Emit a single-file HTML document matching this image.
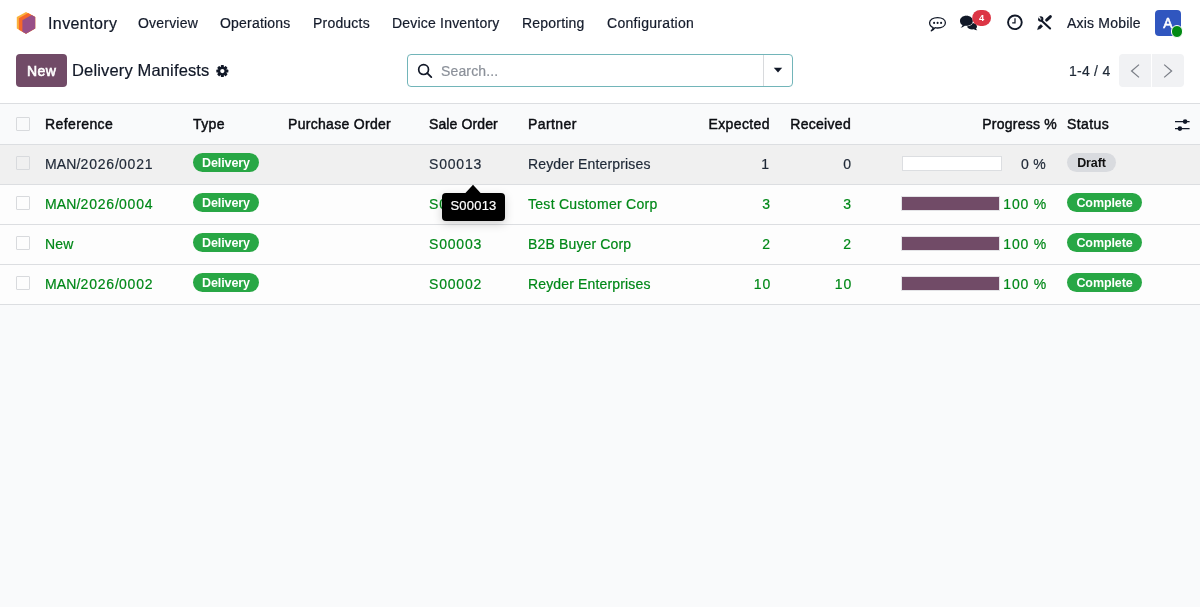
<!DOCTYPE html>
<html><head><meta charset="utf-8">
<style>
*{box-sizing:border-box;margin:0;padding:0}
html,body{width:1200px;height:607px;overflow:hidden;background:#f9fafb;font-family:"Liberation Sans",sans-serif;color:#1f2937;font-size:14px}
.a{position:absolute;white-space:nowrap;line-height:20px;-webkit-text-stroke-width:.2px}
svg{position:absolute;overflow:visible}
.top{position:absolute;left:0;top:0;width:1200px;height:103px;background:#fff}
.nv{top:13px;font-size:14px;color:#141b2b;letter-spacing:.2px}
.btn-new{position:absolute;left:16px;top:54px;width:51px;height:33px;background:#714b67;border-radius:4px}
.search{position:absolute;left:407px;top:54px;width:386px;height:33px;border:1px solid #72b5b9;border-radius:4px;background:#fff}
.pbtn{position:absolute;top:54px;width:32px;height:33px;background:#f1f2f4}
.hdr{position:absolute;left:0;top:103px;width:1200px;height:42px;background:#f9fafb;border-top:1px solid #dcdee1;border-bottom:1px solid #dcdee1}
.row{position:absolute;left:0;width:1200px;height:40px;border-bottom:1px solid #dcdee1;background:#fdfdfd}
.h{color:#0b0d12;-webkit-text-stroke-width:.45px;letter-spacing:.4px}
.c{top:9px;letter-spacing:.15px}
.d{letter-spacing:.8px}
.cb{position:absolute;left:16px;width:14px;height:14px;border:1px solid #d8dadd;background:transparent;border-radius:1px}
.g{color:#008818}
.dk{color:#1f2937}
.badge{position:absolute;top:8px;height:19px;border-radius:10px;font-weight:bold;font-size:12.5px;line-height:21px;text-align:center;color:#fff;background:#28a745;letter-spacing:-.1px}
.draft{background:#d9dbdf;color:#111}
.pb{position:absolute;height:15px;border:1px solid #dcdee1;background:#fff}
.pbf{position:absolute;height:15px;border:1px solid #e3e3e6;background:#714b67}
</style></head><body>
<div style="position:absolute;left:0;top:0;width:1200px;height:607px;background:#f9fafb;will-change:transform">
<div class="top"></div>
<!-- logo -->
<svg style="left:0;top:0" width="40" height="40" viewBox="0 0 40 40">
  <polygon fill="#fbb13c" points="26,11.9 35.2,17.1 35.2,28.5 26,33.8 16.8,28.5 16.8,17.1"/>
  <polygon fill="#f6682a" points="18.9,18.3 28.1,13.1 35.2,17.1 35.2,28.5 26,33.8 18.9,29.8"/>
  <polygon fill="#984f87" points="22.4,20.3 31.6,15.1 35.2,17.1 35.2,28.5 26,33.8 22.4,31.8"/>
</svg>
<div class="a" style="left:48px;top:14px;font-size:16px;letter-spacing:.4px;color:#111827">Inventory</div>
<div class="a nv" style="left:138px">Overview</div>
<div class="a nv" style="left:220px">Operations</div>
<div class="a nv" style="left:313px">Products</div>
<div class="a nv" style="left:392px">Device Inventory</div>
<div class="a nv" style="left:522px">Reporting</div>
<div class="a nv" style="left:607px;letter-spacing:.3px">Configuration</div>

<!-- chat outline icon -->
<svg style="left:925px;top:12px" width="26" height="24" viewBox="925 12 26 24">
  <path d="M933.2,27.6 C930.6,26.6 929.6,24.9 929.6,22.8 C929.6,19.7 933.1,17.6 937.6,17.6 C942.1,17.6 945.4,19.7 945.4,22.8 C945.4,25.9 942.1,28 937.6,28 C936.6,28 935.6,27.9 934.9,27.7 C934,29.3 932.6,30.4 931.2,30.9 C932.2,29.9 932.9,28.9 933.2,27.6 Z" fill="none" stroke="#111827" stroke-width="1.3" stroke-linejoin="round"/>
  <circle cx="934.1" cy="22.9" r="1.05" fill="#111827"/>
  <circle cx="937.6" cy="22.9" r="1.05" fill="#111827"/>
  <circle cx="941.1" cy="22.9" r="1.05" fill="#111827"/>
</svg>
<!-- discuss icon -->
<svg style="left:955px;top:5px" width="40" height="30" viewBox="955 5 40 30">
  <path d="M967.2,27 C967.6,24.6 969.6,23 972.2,23 C975,23 977,24.7 977,26.6 C977,27.6 976.6,28.3 976,28.8 C976.3,29.4 976.8,29.8 977.4,30.2 C975.9,30.2 974.7,29.8 973.8,29.3 C973.3,29.4 972.7,29.4 972.2,29.4 C970,29.4 968,28.5 967.2,27 Z" fill="#111827"/>
  <path d="M962.6,25 C960.9,24.2 960,22.8 960,20.9 C960,17.9 962.8,15.8 966.4,15.8 C970,15.8 972.8,17.9 972.8,20.9 C972.8,23.8 970,25.8 966.4,25.8 C965.8,25.8 965.3,25.8 964.8,25.7 C963.6,26.7 962.2,27.3 960.6,27.7 C961.6,26.9 962.3,26 962.6,25 Z" fill="#111827" stroke="#fff" stroke-width="1.1"/>
  <path d="M962.6,25 C960.9,24.2 960,22.8 960,20.9 C960,17.9 962.8,15.8 966.4,15.8 C970,15.8 972.8,17.9 972.8,20.9 C972.8,23.8 970,25.8 966.4,25.8 C965.8,25.8 965.3,25.8 964.8,25.7 C963.6,26.7 962.2,27.3 960.6,27.7 C961.6,26.9 962.3,26 962.6,25 Z" fill="#111827"/>
  <rect x="972.2" y="9.9" width="18.8" height="16" rx="8" fill="#dc3545"/>
  <text x="981.7" y="20.8" font-family="Liberation Sans" font-weight="bold" font-size="9.3" fill="#fff" text-anchor="middle">4</text>
</svg>
<!-- clock -->
<svg style="left:1000px;top:8px" width="30" height="30" viewBox="1000 8 30 30">
  <circle cx="1014.9" cy="22.3" r="6.85" fill="none" stroke="#111827" stroke-width="1.9"/>
  <path d="M1015,18.2 V22.9 H1012.2" fill="none" stroke="#111827" stroke-width="1.25"/>
</svg>
<!-- tools -->
<svg style="left:1032px;top:10px" width="26" height="26" viewBox="1032 10 26 26">
  <path d="M1041.4,20.4 L1050.1,28.5" stroke="#111827" stroke-width="2.1" stroke-linecap="round"/>
  <circle cx="1040.7" cy="19" r="1.75" fill="none" stroke="#111827" stroke-width="1.9"/>
  <circle cx="1039.3" cy="17.6" r="1.05" fill="#fff"/>
  <path d="M1046.6,20.1 L1050.4,16.6" stroke="#111827" stroke-width="2.9" stroke-linecap="round"/>
  <path d="M1037.5,29.6 L1038.6,26.6 L1040.9,24.6 L1042.7,26.3 L1040.6,28.5 Z" fill="#111827" stroke="#111827" stroke-width=".5" stroke-linejoin="round"/>
</svg>
<div class="a nv" style="left:1067px">Axis Mobile</div>
<div style="position:absolute;left:1155px;top:10px;width:26px;height:26px;background:#3056bf;border-radius:4px"></div>
<div class="a" style="left:1155px;top:13px;width:26px;text-align:center;color:#fff;font-size:14px;-webkit-text-stroke-width:.55px">A</div>
<div style="position:absolute;left:1170.5px;top:25.3px;width:12.4px;height:12.4px;background:#028a13;border-radius:50%;border:1.3px solid #fff"></div>

<!-- control panel -->
<div class="btn-new"></div>
<div class="a" style="left:27px;top:61px;color:#fff;font-size:14px;-webkit-text-stroke-width:.6px;letter-spacing:.4px">New</div>
<div class="a" style="left:72px;top:59.5px;font-size:16.5px;letter-spacing:.15px;color:#111827">Delivery Manifests</div>
<svg style="left:210px;top:60px" width="24" height="24" viewBox="210 60 24 24">
  <g transform="translate(222.35,71.1)" fill="#111827">
    <rect x="-1.5" y="-6" width="3" height="12" rx=".6"/>
    <rect x="-1.5" y="-6" width="3" height="12" rx=".6" transform="rotate(45)"/>
    <rect x="-1.5" y="-6" width="3" height="12" rx=".6" transform="rotate(90)"/>
    <rect x="-1.5" y="-6" width="3" height="12" rx=".6" transform="rotate(135)"/>
    <circle r="4.4"/>
    <circle r="2.15" fill="#fff"/>
  </g>
</svg>
<div class="search">
  <div style="position:absolute;left:355px;top:0;width:1px;height:31px;background:#d8dadd"></div>
</div>
<svg style="left:412px;top:58px" width="26" height="26" viewBox="412 58 26 26">
  <circle cx="423.6" cy="69.6" r="4.9" fill="none" stroke="#111827" stroke-width="1.7"/>
  <path d="M427.2,73.2 L431.3,77.1" stroke="#111827" stroke-width="1.8" stroke-linecap="round"/>
</svg>
<div class="a" style="left:441px;top:61px;color:#8b9099;letter-spacing:.15px">Search...</div>
<svg style="left:770px;top:64px" width="16" height="12" viewBox="770 64 16 12">
  <path d="M773.8,67.8 H782.2 L778,72.5 Z" fill="#111827"/>
</svg>
<div class="a" style="left:1069px;top:61px;letter-spacing:.25px;color:#1f2937">1-4 / 4</div>
<div class="pbtn" style="left:1119px;border-radius:4px 0 0 4px"></div>
<div class="pbtn" style="left:1152px;border-radius:0 4px 4px 0"></div>
<svg style="left:1125px;top:60px" width="60" height="24" viewBox="1125 60 60 24">
  <path d="M1139,64.6 L1131.6,71 L1139,77.4" fill="none" stroke="#7a7e86" stroke-width="1.25"/>
  <path d="M1164.2,64.6 L1171.6,71 L1164.2,77.4" fill="none" stroke="#7a7e86" stroke-width="1.25"/>
</svg>

<!-- table header -->
<div class="hdr"></div>
<div class="cb" style="top:117px"></div>
<div class="a h" style="left:45px;top:114px">Reference</div>
<div class="a h" style="left:193px;top:114px">Type</div>
<div class="a h" style="left:288px;top:114px;letter-spacing:.3px">Purchase Order</div>
<div class="a h" style="left:429px;top:114px;letter-spacing:.12px">Sale Order</div>
<div class="a h" style="left:528px;top:114px">Partner</div>
<div class="a h" style="right:430px;top:114px">Expected</div>
<div class="a h" style="right:349px;top:114px;letter-spacing:.3px">Received</div>
<div class="a h" style="right:143px;top:114px;letter-spacing:.25px">Progress %</div>
<div class="a h" style="left:1067px;top:114px">Status</div>
<svg style="left:1170px;top:114px" width="26" height="22" viewBox="1170 114 26 22">
  <path d="M1175,121.6 H1189.6 M1175,128.6 H1189.6" stroke="#111827" stroke-width="1.3"/>
  <circle cx="1185.1" cy="121.6" r="2.3" fill="#111827"/>
  <circle cx="1179.9" cy="128.6" r="2.3" fill="#111827"/>
</svg>

<!-- row 1 -->
<div class="row" style="top:145px;background:#f0f0f0"></div>
<div class="cb" style="top:156px"></div>
<div class="a dk" style="left:45px;top:154px;letter-spacing:.15px">MAN/<span class="d">2026</span>/<span class="d">0021</span></div>
<div class="badge" style="left:193px;top:153px;width:66px">Delivery</div>
<div class="a dk d" style="left:429px;top:154px">S00013</div>
<div class="a dk c" style="left:528px;top:154px">Reyder Enterprises</div>
<div class="a dk" style="right:431px;top:154px">1</div>
<div class="a dk" style="right:349px;top:154px">0</div>
<div class="pb" style="left:902px;top:156px;width:100px"></div>
<div class="a dk" style="right:154px;top:154px;letter-spacing:.3px">0 %</div>
<div class="badge draft" style="left:1067px;top:153px;width:49px">Draft</div>

<!-- row 2 -->
<div class="row" style="top:185px"></div>
<div class="cb" style="top:196px"></div>
<div class="a g" style="left:45px;top:194px;letter-spacing:.15px">MAN/<span class="d">2026</span>/<span class="d">0004</span></div>
<div class="badge" style="left:193px;top:193px;width:66px">Delivery</div>
<div class="a g d" style="left:429px;top:194px">S00004</div>
<div class="a g c" style="left:528px;top:194px;letter-spacing:.28px">Test Customer Corp</div>
<div class="a g" style="right:430px;top:194px">3</div>
<div class="a g" style="right:349px;top:194px">3</div>
<div class="pbf" style="left:900.5px;top:196px;width:99px"></div>
<div class="a g d" style="right:153px;top:194px">100 %</div>
<div class="badge" style="left:1067px;top:193px;width:75px">Complete</div>

<!-- row 3 -->
<div class="row" style="top:225px"></div>
<div class="cb" style="top:236px"></div>
<div class="a g c" style="left:45px;top:234px">New</div>
<div class="badge" style="left:193px;top:233px;width:66px">Delivery</div>
<div class="a g d" style="left:429px;top:234px">S00003</div>
<div class="a g c" style="left:528px;top:234px">B2B Buyer Corp</div>
<div class="a g" style="right:430px;top:234px">2</div>
<div class="a g" style="right:349px;top:234px">2</div>
<div class="pbf" style="left:900.5px;top:236px;width:99px"></div>
<div class="a g d" style="right:153px;top:234px">100 %</div>
<div class="badge" style="left:1067px;top:233px;width:75px">Complete</div>

<!-- row 4 -->
<div class="row" style="top:265px"></div>
<div class="cb" style="top:276px"></div>
<div class="a g" style="left:45px;top:274px;letter-spacing:.15px">MAN/<span class="d">2026</span>/<span class="d">0002</span></div>
<div class="badge" style="left:193px;top:273px;width:66px">Delivery</div>
<div class="a g d" style="left:429px;top:274px">S00002</div>
<div class="a g c" style="left:528px;top:274px">Reyder Enterprises</div>
<div class="a g d" style="right:429px;top:274px">10</div>
<div class="a g d" style="right:348px;top:274px">10</div>
<div class="pbf" style="left:900.5px;top:276px;width:99px"></div>
<div class="a g d" style="right:153px;top:274px">100 %</div>
<div class="badge" style="left:1067px;top:273px;width:75px">Complete</div>

<!-- tooltip -->
<div style="position:absolute;left:442px;top:193px;width:63px;height:28px;background:#000;border-radius:4px;box-shadow:0 3px 10px rgba(0,0,0,.18)"></div>
<svg style="left:460px;top:180px" width="26" height="16" viewBox="460 180 26 16">
  <path d="M465.2,193.2 L473,184.8 L480.8,193.2 Z" fill="#000"/>
</svg>
<div class="a" style="left:450.5px;top:196px;color:#fff;font-size:13px;letter-spacing:.2px">S00013</div>
</div>
</body></html>
